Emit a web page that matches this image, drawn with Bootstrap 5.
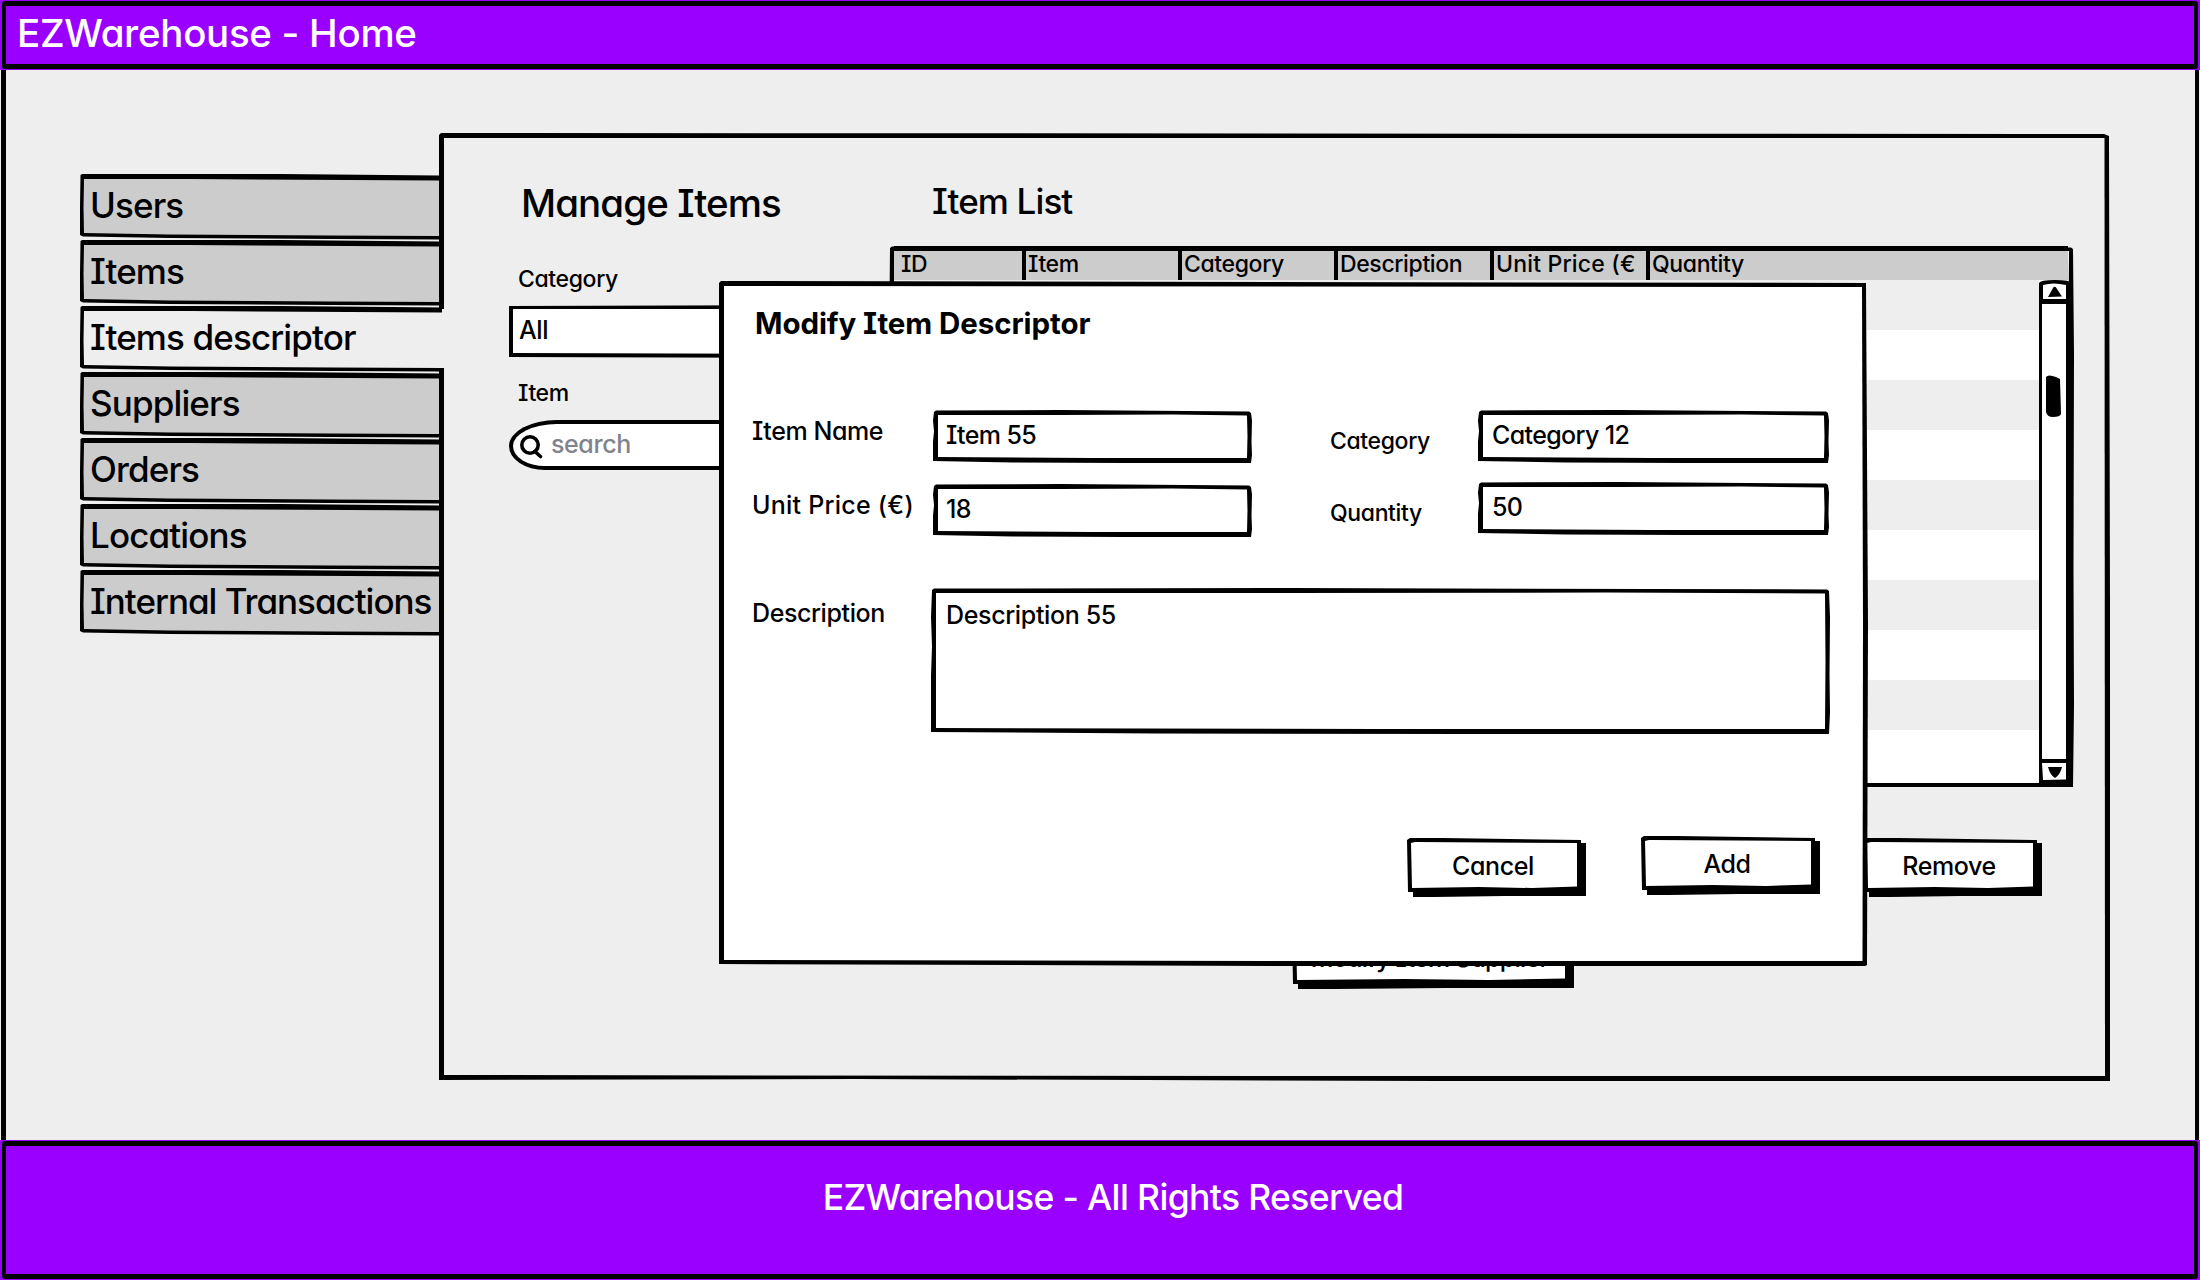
<!DOCTYPE html>
<html lang="en">
<head>
<meta charset="utf-8">
<title>EZWarehouse - Home</title>
<link rel="stylesheet" href="https://cdn.jsdelivr.net/npm/bootstrap@5.3.0/dist/css/bootstrap.min.css">
<style>
  body { width: 2200px; height: 1280px; overflow: hidden; background: #eee; color: #000;
    font-family: Inter, "Liberation Sans", sans-serif; font-weight: 500; font-size: 25px; line-height: 30px;
    letter-spacing: -.016em; font-feature-settings: "cv08", "cv11"; }
  .fs-title { font-size: 38.5px; line-height: 40px; letter-spacing: -.024em; }
  .fs-head { font-size: 35px; line-height: 36px; letter-spacing: -.025em; }
  .fs-label { font-size: 23px; line-height: 30px; letter-spacing: -.016em; }

  /* Hand-drawn frame: black outer shape with a filled inner shape on top */
  .ink { position: relative; isolation: isolate; --fill: #fff; }
  .ink::before, .ink::after { content: ""; position: absolute; inset: 0; }
  .ink::before { background: #000; z-index: -2;
    clip-path: polygon(1px 2px, 3px .5px, 40% 0, calc(100% - 3px) 1.5px, calc(100% - 1px) 3px, 100% 20%, calc(100% - .5px) 60%, 100% 85%, calc(100% - 1px) 100%, 60% 100%, 25% calc(100% - .5px), 0 calc(100% - 2px), 0 60%, 1px 40%, 0 20%); }
  .ink::after { background: var(--fill); z-index: -1;
    clip-path: polygon(5px 5px, 40% 5px, 75% 4.5px, calc(100% - 5px) 5.5px, calc(100% - 4.5px) 50%, calc(100% - 5px) calc(100% - 5px), 50% calc(100% - 5px), 5px calc(100% - 6px), 5px 50%); }

  .bar-top { height: 70px; background: #90f; padding: 13px 0 0 17px; letter-spacing: -.008em; }
  .bar-bottom { height: 140px; background: #90f; padding: 43px 0 0 26px; font-size: 35.5px; letter-spacing: -.018em; }
  .bar-top, .bar-bottom { position: relative; }
  .bar-top::after, .bar-bottom::after { content: ""; position: absolute; inset: 1px 2px 1px 2px; border: 5px solid #000; border-width: 5px 4px; border-radius: 3px; }
  .stage { border-left: 5px solid #000; border-right: 4px solid #000; margin: 0 1px; padding: 63px 0 0 74px; }

  .side { width: 364px; margin-right: -5px; padding-top: 42px; z-index: 1; }
  .side .tab { display: block; height: 66px; width: 359px; padding: 12px 0 0 10px; --fill: #ccc; color: #000; text-decoration: none; white-space: nowrap; }
  .side .tab::before { clip-path: polygon(.5px 1px, 3px -.5px, 30% -1px, 100% 1.5px, 100% 65.5px, 70% 65px, 25% 64px, 3px 62.5px, 0 61px, 0 50%); inset: -1px 0 0 0; }
  .side .tab::after { clip-path: polygon(4px 4px, 30% 4px, 100% 5.500px, 100% 61px, 70% 60.5px, 25% 59.5px, 4px 58px, 3.5px 50%); }
  .side .tab.active { --fill: #eee; width: 364px; }
  .side .tab.active::after { clip-path: polygon(4px 4px, 30% 4px, 362px 5.5px, 362px 2px, 100% 2px, 100% 61px, 70% 60.5px, 25% 59.5px, 4px 58px, 3.5px 50%); }
  .side .tab-long { letter-spacing: -.029em; }

  .panel { width: 1671px; height: 948px; --fill: #eee; }
  .panel::before { clip-path: polygon(0 2px, 2px 0, 1665px 1px, 1670px 3px, 100% 50%, 1671px 100%, 60% 100%, 25% 99.8%, 0 947px); }
  .panel::after { clip-path: polygon(5px 5px, 1665.5px 5px, 1666px 943px, 50% 943px, 5px 942px); }
  .filters { width: 366px; padding: 50px 0 0 70px; }
  .filters .fs-title { margin-left: 12px; margin-bottom: 41px; }
  .filters .fs-label { margin-left: 9px; }
  .select-box { height: 53px; margin: 11px 0 20px; padding: 10px 0 0 10px; }
  .select-box::before { clip-path: polygon(0 1px, 100% 0, 100% 100%, 0 52px); }
  .select-box::after { clip-path: polygon(4px 4px, 100% 4px, 100% 49px, 4px 48px); }
  .search-box { height: 50px; margin-top: 12px; padding-left: 6px; background: #fff; border: 4px solid #000; border-right: 0; border-radius: 48px 0 0 36px / 26px 0 0 24px; color: #82828c; }
  .search-box svg { margin: 3px 6px 0 0; }
  .search-box span { padding-bottom: 3px; }

  .listing { padding: 50px 0 0 84px; width: 1269px; }
  .listing .fs-head { margin: 0 0 27px 43px; }
  .grid-box { height: 541px; }
  .grid-box::after { clip-path: polygon(5px 5px, 60% 6px, 1180px 5px, 1178px 50%, 1179px 537px, 5px 537px); }
  .grid-head { height: 34px; margin: 0 6px 0 5px; background: #ccc; box-shadow: inset 0 5px #000; }
  .grid-head div { width: 156px; height: 34px; padding: 1px 0 0 2px; border-left: 4px solid #000; white-space: nowrap; overflow: hidden; line-height: 34px; }
  .grid-head div:first-child { width: 128px; border: 0; padding-left: 7px; }
  .grid-head div:nth-child(5) { letter-spacing: .008em; }
  .grid-head div:last-child { width: 300px; }
  .grid-rows { width: 1145px; margin-left: 5px; }
  .grid-rows div { height: 50px; background: #fff; }
  .grid-rows div:nth-child(odd) { background: #eee; }
  .grid-rows div:last-child { height: 52px; }
  .scroller { width: 33px; height: 506px; }
  .actions-top { padding: 51px 32px 0 0; }
  .actions-bottom { padding: 33px 0 0 403px; }

  /* Push button with a heavy offset shadow */
  .push { width: 179px; height: 59px; padding: 13px 7px 0 0; text-align: center; white-space: nowrap; }
  .push::before { clip-path: polygon(0 2px, 3px 0, 20% 0, calc(100% - 5px) 2px, calc(100% - 5px) 5px, 100% 5px, 100% calc(100% - 1px), 55% calc(100% - 1px), 15% 100%, 6px 100%, 6px calc(100% - 5px), 1px calc(100% - 5px)); }
  .push::after { clip-path: polygon(4px 5px, 8px 4px, calc(100% - 9px) 5px, calc(100% - 9px) 48.5px, 70% 50px, 40% 49px, 5px 50px); }
  .push-wide { width: 282px; letter-spacing: -.03em; }

  .modal-sheet { position: absolute; left: 719px; top: 281px; width: 1149px; height: 685px; padding: 22px 0 0 33px; z-index: 5; }
  .modal-sheet::before { clip-path: polygon(0 2px, 2px 0, 1147px 2px, 1149px 50%, 1148px 684px, 1146px 100%, 50% 100%, 0 683px); }
  .modal-sheet::after { clip-path: polygon(5px 5px, 1143px 6px, 1144px 50%, 1143.5px 680px, 50% 680px, 5px 679px); }
  .sheet-title { font-weight: 700; font-size: 29.5px; line-height: 40px; letter-spacing: -.003em; margin-left: 3px; margin-bottom: 67px; }
  .pair-l { gap: 21px; }
  .pair-r { gap: 19px; margin-left: 78px; }
  .caption-l { width: 181px; padding-top: 6px; }
  .caption-price { letter-spacing: .01em; }
  .caption-r { width: 148px; padding-top: 16px; }
  .field { height: 53px; padding: 10px 0 0 13px; letter-spacing: -.025em; }
  .field-l { width: 319px; }
  .field-r { width: 351px; padding-left: 14px; }
  .area { width: 899px; height: 146px; padding: 12px 0 0 15px; letter-spacing: -.014em; }
  .area-row { margin-top: 51px; }
  .area-row .caption-l { width: 179px; padding-top: 10px; }
  .sheet-actions { margin: 102px 48px 0 0; gap: 55px; }
  .sheet-actions .push:first-child { margin-top: 2px; }
</style>
<script src="https://cdn.jsdelivr.net/npm/bootstrap@5.3.0/dist/js/bootstrap.bundle.min.js"></script>
</head>
<body class="d-flex flex-column position-relative">
  <header class="bar-top fs-title text-white">EZWarehouse - Home</header>

  <main class="stage flex-grow-1 d-flex align-items-start">
    <nav class="side d-flex flex-column position-relative fs-head">
      <a class="tab ink">Users</a>
      <a class="tab ink">Items</a>
      <a class="tab ink active">Items descriptor</a>
      <a class="tab ink">Suppliers</a>
      <a class="tab ink">Orders</a>
      <a class="tab ink">Locations</a>
      <a class="tab tab-long ink">Internal Transactions</a>
    </nav>

    <section class="panel ink d-flex flex-shrink-0">
      <div class="filters">
        <div class="fs-title text-nowrap">Manage Items</div>
        <div class="fs-label">Category</div>
        <div class="select-box ink">All</div>
        <div class="fs-label">Item</div>
        <div class="search-box d-flex align-items-center">
          <svg width="26" height="26" viewBox="0 0 26 26" fill="none" stroke="#000" stroke-width="3.6" stroke-linecap="round"><circle cx="11" cy="11" r="8.2"/><path d="M16 17.5l5.5 5"/></svg>
          <span>search</span>
        </div>
      </div>

      <div class="listing">
        <div class="fs-head">Item List</div>
        <div class="grid-box ink">
          <div class="grid-head d-flex fs-label">
            <div>ID</div><div>Item</div><div>Category</div><div>Description</div><div>Unit Price (€</div><div>Quantity</div>
          </div>
          <div class="d-flex">
            <div class="grid-rows"><div></div><div></div><div></div><div></div><div></div><div></div><div></div><div></div><div></div><div></div></div>
            <svg class="scroller" viewBox="0 0 33 506">
              <path d="M0 3Q1 0 16 0T33 3V506H0z"/>
              <path d="M4 5Q14 2 27 5V19H4zM3 24H27V479H3zM3 483H27V499.500L4 500z" fill="#fff"/>
              <path d="M9 17L14 8Q16 5 18 9L23 16.500zM9 487H23Q21 495 16 498Q11 495 9 487zM7 97Q9 94 17 97L21 99L22 134Q21 137 14 137Q8 137 7 132z"/>
            </svg>
          </div>
        </div>
        <div class="actions-top d-flex justify-content-end"><div class="push ink">Remove</div></div>
        <div class="actions-bottom d-flex"><div class="push push-wide ink">Modify Item Supplier</div></div>
      </div>
    </section>
  </main>

  <footer class="bar-bottom text-white text-center">EZWarehouse - All Rights Reserved</footer>

  <div class="modal-sheet ink" role="dialog">
    <div class="sheet-title">Modify Item Descriptor</div>
    <div class="d-flex align-items-start">
      <div class="pair-l d-flex flex-column">
        <div class="d-flex"><div class="caption-l">Item Name</div><div class="field field-l ink">Item 55</div></div>
        <div class="d-flex"><div class="caption-l caption-price">Unit Price (€)</div><div class="field field-l ink">18</div></div>
      </div>
      <div class="pair-r d-flex flex-column">
        <div class="d-flex"><div class="caption-r fs-label">Category</div><div class="field field-r ink">Category 12</div></div>
        <div class="d-flex"><div class="caption-r fs-label">Quantity</div><div class="field field-r ink">50</div></div>
      </div>
    </div>
    <div class="area-row d-flex"><div class="caption-l">Description</div><div class="area ink">Description 55</div></div>
    <div class="sheet-actions d-flex justify-content-end align-items-start">
      <div class="push ink">Cancel</div>
      <div class="push ink">Add</div>
    </div>
  </div>
</body>
</html>
